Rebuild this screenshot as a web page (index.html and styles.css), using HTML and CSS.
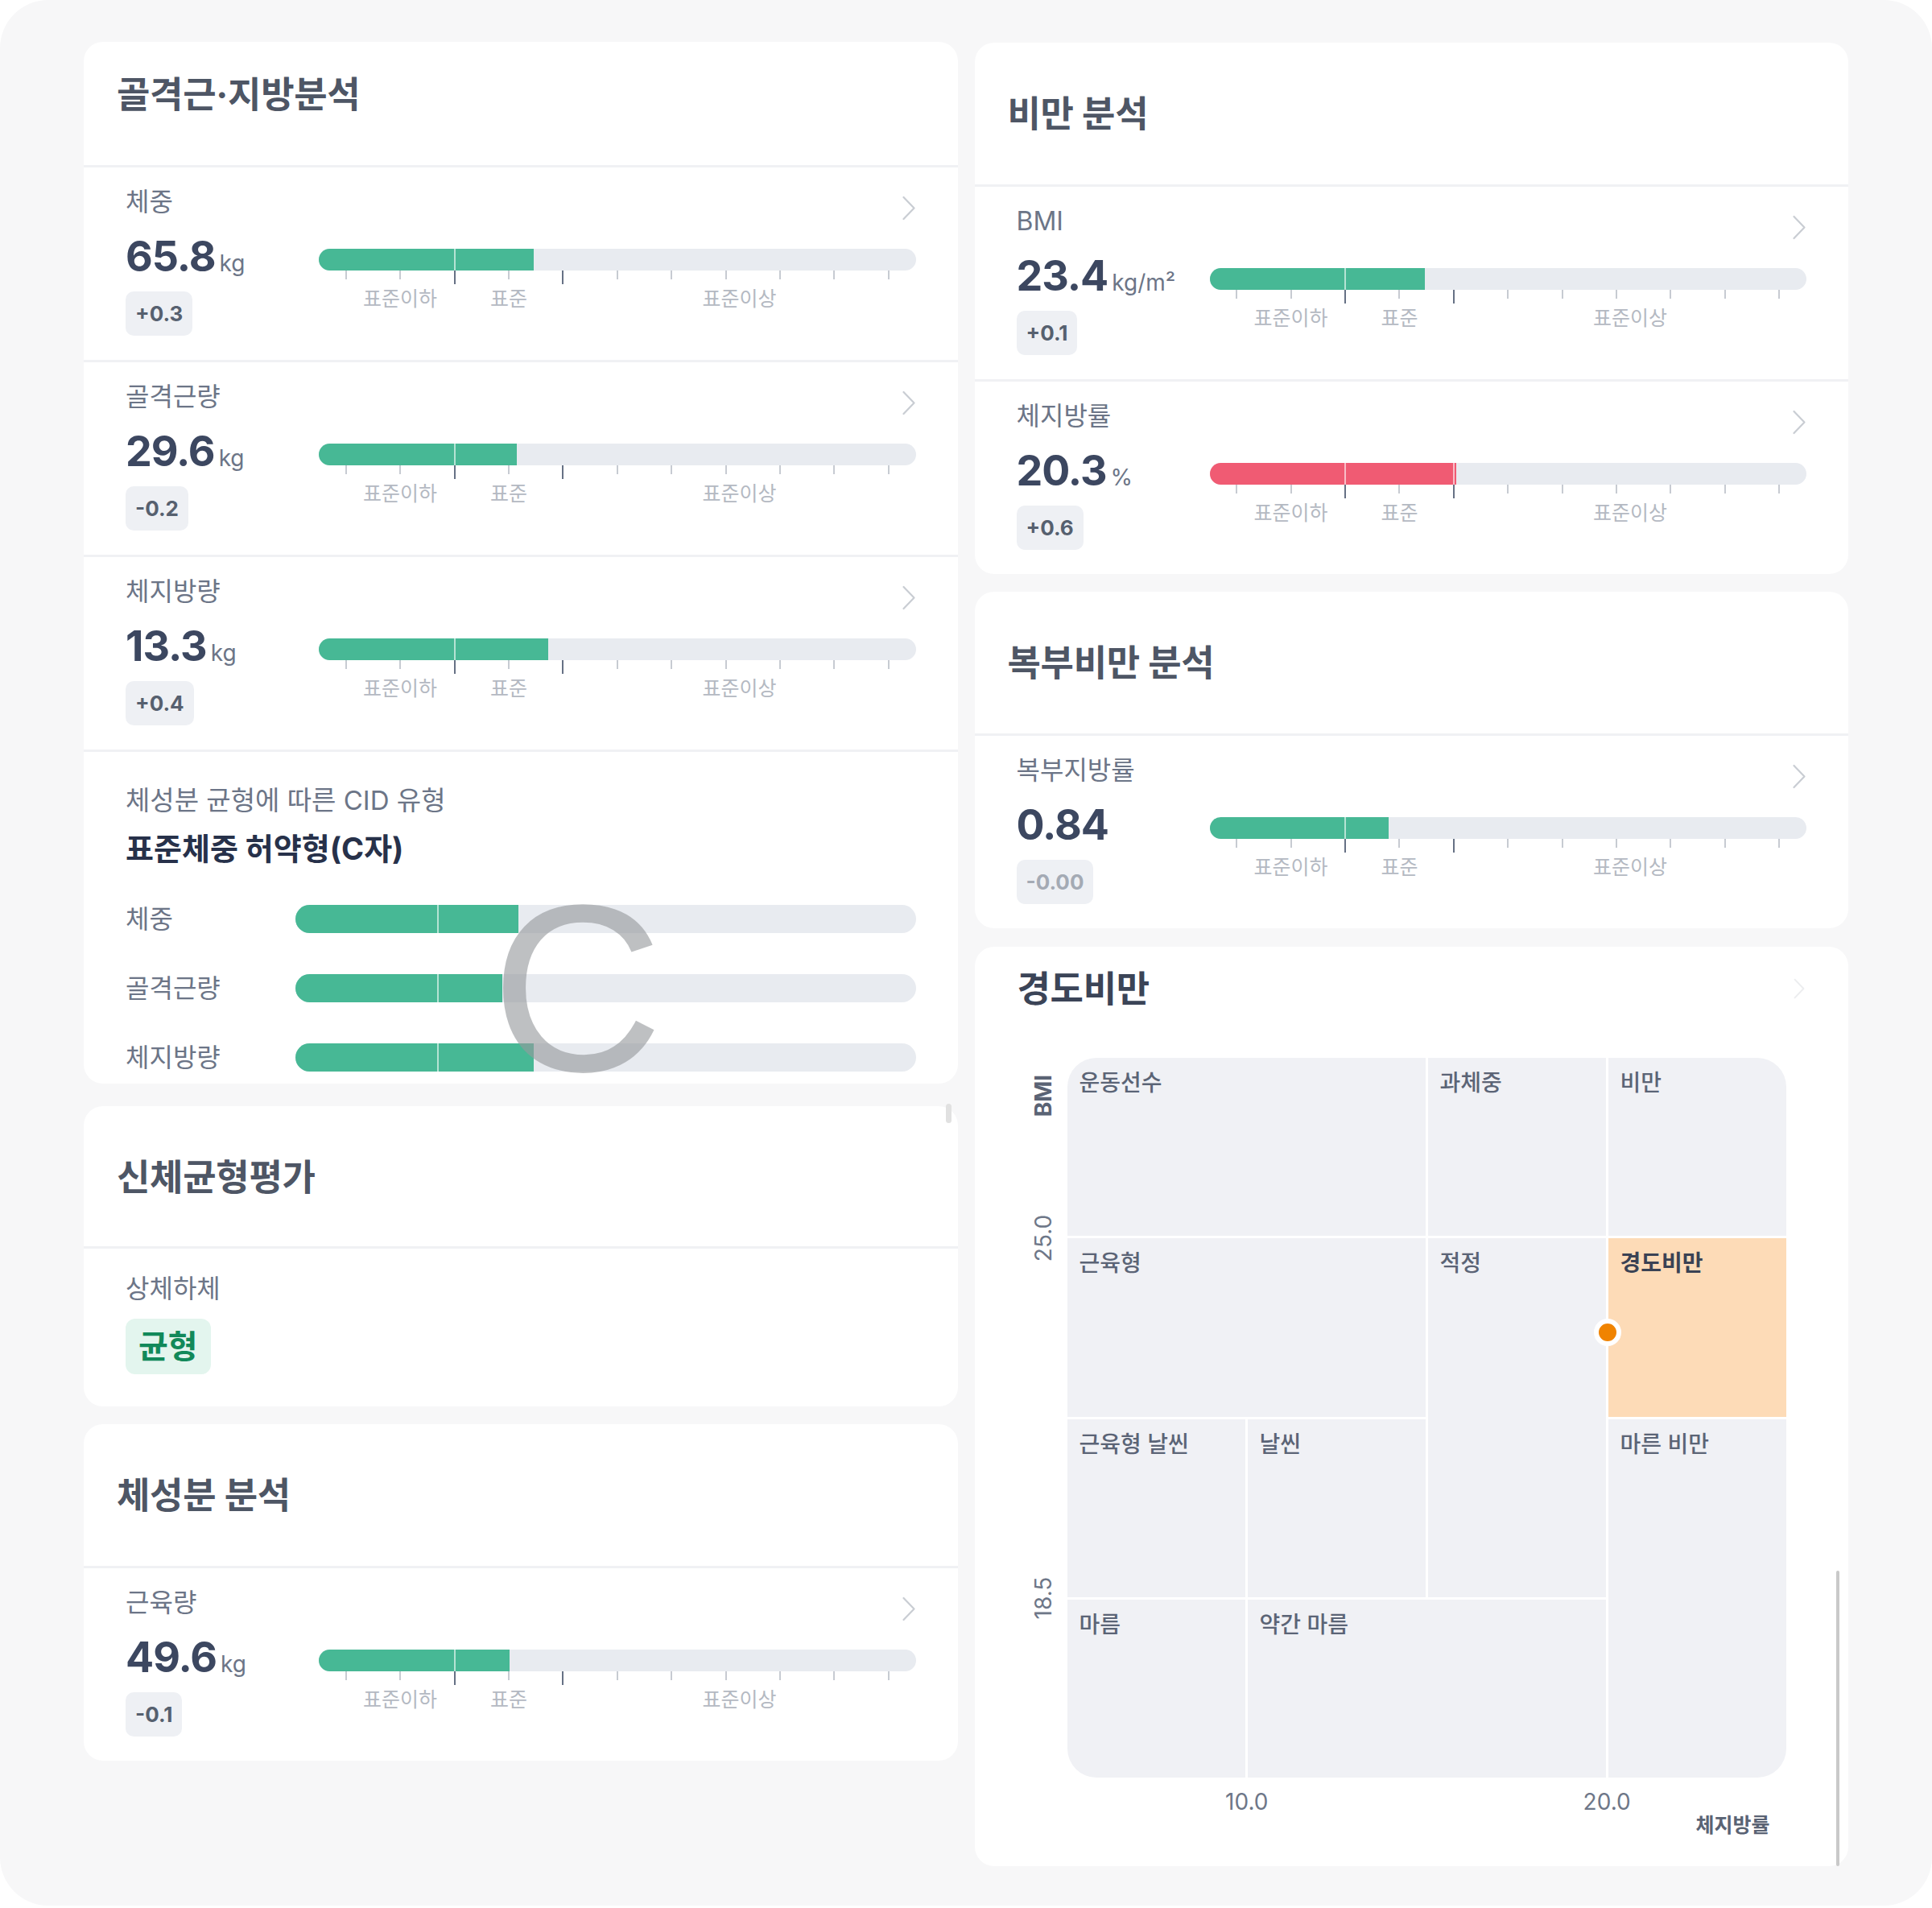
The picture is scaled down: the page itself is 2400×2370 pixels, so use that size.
FILE: index.html
```html
<!DOCTYPE html>
<html lang="ko">
<head>
<meta charset="utf-8">
<title>체성분 분석</title>
<link rel="stylesheet" href="styles.css">
</head>
<body>
<div class="screen">
  <div class="col">
    <section class="card card-skm">
      <header class="card-head compact"><h2 class="title">골격근·지방분석</h2></header>

      <div class="metric">
        <div class="metric-head"><span class="metric-label">체중</span><svg class="chev" viewBox="0 0 18 31"><path d="M2.5 2 L15.5 15.5 L2.5 29"/></svg></div>
        <div class="metric-main">
          <div class="metric-left">
            <div class="metric-value"><span class="num">65.8</span><span class="unit">kg</span></div>
            <span class="delta">+0.3</span>
          </div>
          <div class="gauge">
            <div class="bar"><div class="fill" style="width:36%"></div><i class="mark" style="left:22.73%"></i></div>
            <div class="ticks"><i></i><i></i><i class="major"></i><i></i><i class="major"></i><i></i><i></i><i></i><i></i><i></i><i></i></div>
            <div class="tick-labels"><span class="tl-low">표준이하</span><span class="tl-mid">표준</span><span class="tl-high">표준이상</span></div>
          </div>
        </div>
      </div>

      <div class="metric">
        <div class="metric-head"><span class="metric-label">골격근량</span><svg class="chev" viewBox="0 0 18 31"><path d="M2.5 2 L15.5 15.5 L2.5 29"/></svg></div>
        <div class="metric-main">
          <div class="metric-left">
            <div class="metric-value"><span class="num">29.6</span><span class="unit">kg</span></div>
            <span class="delta">-0.2</span>
          </div>
          <div class="gauge">
            <div class="bar"><div class="fill" style="width:33.2%"></div><i class="mark" style="left:22.73%"></i></div>
            <div class="ticks"><i></i><i></i><i class="major"></i><i></i><i class="major"></i><i></i><i></i><i></i><i></i><i></i><i></i></div>
            <div class="tick-labels"><span class="tl-low">표준이하</span><span class="tl-mid">표준</span><span class="tl-high">표준이상</span></div>
          </div>
        </div>
      </div>

      <div class="metric">
        <div class="metric-head"><span class="metric-label">체지방량</span><svg class="chev" viewBox="0 0 18 31"><path d="M2.5 2 L15.5 15.5 L2.5 29"/></svg></div>
        <div class="metric-main">
          <div class="metric-left">
            <div class="metric-value"><span class="num">13.3</span><span class="unit">kg</span></div>
            <span class="delta">+0.4</span>
          </div>
          <div class="gauge">
            <div class="bar"><div class="fill" style="width:38.4%"></div><i class="mark" style="left:22.73%"></i></div>
            <div class="ticks"><i></i><i></i><i class="major"></i><i></i><i class="major"></i><i></i><i></i><i></i><i></i><i></i><i></i></div>
            <div class="tick-labels"><span class="tl-low">표준이하</span><span class="tl-mid">표준</span><span class="tl-high">표준이상</span></div>
          </div>
        </div>
      </div>

      <div class="cid">
        <div class="cid-label">체성분 균형에 따른 CID 유형</div>
        <div class="cid-type">표준체중 허약형(C자)</div>
        <div class="cid-bars">
          <div class="cid-row"><span class="cid-name">체중</span><div class="bar lg"><div class="fill" style="width:35.9%"></div><i class="mark" style="left:23%"></i></div></div>
          <div class="cid-row"><span class="cid-name">골격근량</span><div class="bar lg"><div class="fill" style="width:33.3%"></div><i class="mark" style="left:23%"></i></div></div>
          <div class="cid-row"><span class="cid-name">체지방량</span><div class="bar lg"><div class="fill" style="width:38.4%"></div><i class="mark" style="left:23%"></i></div></div>
        </div>
        <span class="cid-letter">C</span>
      </div>
    </section>

    <section class="card card-balance">
      <i class="thumb"></i>
      <header class="card-head short"><h2 class="title">신체균형평가</h2></header>
      <div class="balance">
        <div class="metric-label">상체하체</div>
        <span class="balance-badge">균형</span>
      </div>
    </section>

    <section class="card card-comp">
      <header class="card-head"><h2 class="title">체성분 분석</h2></header>
      <div class="metric">
        <div class="metric-head"><span class="metric-label">근육량</span><svg class="chev" viewBox="0 0 18 31"><path d="M2.5 2 L15.5 15.5 L2.5 29"/></svg></div>
        <div class="metric-main">
          <div class="metric-left">
            <div class="metric-value"><span class="num">49.6</span><span class="unit">kg</span></div>
            <span class="delta">-0.1</span>
          </div>
          <div class="gauge">
            <div class="bar"><div class="fill" style="width:32%"></div><i class="mark" style="left:22.73%"></i></div>
            <div class="ticks"><i></i><i></i><i class="major"></i><i></i><i class="major"></i><i></i><i></i><i></i><i></i><i></i><i></i></div>
            <div class="tick-labels"><span class="tl-low">표준이하</span><span class="tl-mid">표준</span><span class="tl-high">표준이상</span></div>
          </div>
        </div>
      </div>
    </section>
  </div>

  <div class="col">
    <section class="card card-obesity">
      <header class="card-head"><h2 class="title">비만 분석</h2></header>
      <div class="metric">
        <div class="metric-head"><span class="metric-label">BMI</span><svg class="chev" viewBox="0 0 18 31"><path d="M2.5 2 L15.5 15.5 L2.5 29"/></svg></div>
        <div class="metric-main">
          <div class="metric-left">
            <div class="metric-value"><span class="num">23.4</span><span class="unit">kg/m²</span></div>
            <span class="delta">+0.1</span>
          </div>
          <div class="gauge">
            <div class="bar"><div class="fill" style="width:36.1%"></div><i class="mark" style="left:22.73%"></i></div>
            <div class="ticks"><i></i><i></i><i class="major"></i><i></i><i class="major"></i><i></i><i></i><i></i><i></i><i></i><i></i></div>
            <div class="tick-labels"><span class="tl-low">표준이하</span><span class="tl-mid">표준</span><span class="tl-high">표준이상</span></div>
          </div>
        </div>
      </div>
      <div class="metric">
        <div class="metric-head"><span class="metric-label">체지방률</span><svg class="chev" viewBox="0 0 18 31"><path d="M2.5 2 L15.5 15.5 L2.5 29"/></svg></div>
        <div class="metric-main">
          <div class="metric-left">
            <div class="metric-value"><span class="num">20.3</span><span class="unit">%</span></div>
            <span class="delta">+0.6</span>
          </div>
          <div class="gauge">
            <div class="bar"><div class="fill red" style="width:41.4%"></div><i class="mark" style="left:22.73%"></i><i class="mark" style="left:40.91%"></i></div>
            <div class="ticks"><i></i><i></i><i class="major"></i><i></i><i class="major"></i><i></i><i></i><i></i><i></i><i></i><i></i></div>
            <div class="tick-labels"><span class="tl-low">표준이하</span><span class="tl-mid">표준</span><span class="tl-high">표준이상</span></div>
          </div>
        </div>
      </div>
    </section>

    <section class="card card-abd">
      <header class="card-head"><h2 class="title">복부비만 분석</h2></header>
      <div class="metric">
        <div class="metric-head"><span class="metric-label">복부지방률</span><svg class="chev" viewBox="0 0 18 31"><path d="M2.5 2 L15.5 15.5 L2.5 29"/></svg></div>
        <div class="metric-main">
          <div class="metric-left">
            <div class="metric-value"><span class="num">0.84</span></div>
            <span class="delta muted">-0.00</span>
          </div>
          <div class="gauge">
            <div class="bar"><div class="fill" style="width:30%"></div><i class="mark" style="left:22.73%"></i></div>
            <div class="ticks"><i></i><i></i><i class="major"></i><i></i><i class="major"></i><i></i><i></i><i></i><i></i><i></i><i></i></div>
            <div class="tick-labels"><span class="tl-low">표준이하</span><span class="tl-mid">표준</span><span class="tl-high">표준이상</span></div>
          </div>
        </div>
      </div>
    </section>

    <section class="card card-chart">
      <div class="chart-head">
        <h2 class="chart-title">경도비만</h2>
        <svg class="chev faint" viewBox="0 0 18 31"><path d="M2.5 2 L15.5 15.5 L2.5 29"/></svg>
      </div>
      <div class="chart">
        <div class="y-axis">
          <span class="yl bold" style="top:47px">BMI</span>
          <span class="yl" style="top:224px">25.0</span>
          <span class="yl" style="top:671px">18.5</span>
        </div>
        <div class="plot">
          <div class="zones">
            <div class="zone z-athlete">운동선수</div>
            <div class="zone z-over">과체중</div>
            <div class="zone z-obese">비만</div>
            <div class="zone z-muscle">근육형</div>
            <div class="zone z-normal">적정</div>
            <div class="zone z-mild hl">경도비만</div>
            <div class="zone z-mslim">근육형 날씬</div>
            <div class="zone z-slim">날씬</div>
            <div class="zone z-thinfat">마른 비만</div>
            <div class="zone z-thin">마름</div>
            <div class="zone z-sthin">약간 마름</div>
          </div>
          <span class="dot" style="left:671px;top:341px"></span>
        </div>
        <div class="x-axis">
          <span class="xl" style="left:25%">10.0</span>
          <span class="xl" style="left:75.1%">20.0</span>
        </div>
        <div class="x-title">체지방률</div>
      </div>
      <i class="scrollbar"></i>
    </section>
  </div>
</div>
</body>
</html>
```

FILE: styles.css
```css
* { box-sizing: border-box; margin: 0; padding: 0; }
html, body { background: #ffffff; }
body {
  font-family: Inter, "Noto Sans CJK KR", sans-serif;
  color: #3e4961;
  width: 2400px;
  height: 2370px;
  overflow: hidden;
}

.screen {
  width: 2400px;
  height: 2367px;
  background: #f7f7f8;
  border-radius: 60px;
  padding: 52px 104px 0;
  display: flex;
  gap: 21px;
  overflow: hidden;
}

.col {
  flex: 1;
  min-width: 0;
  display: flex;
  flex-direction: column;
}

.card {
  position: relative;
  background: #ffffff;
  border-radius: 24px;
}

.card-balance { margin-top: 28px; }
.card-comp { margin-top: 22px; }
.card-obesity { margin-top: 1px; }
.card-abd { margin-top: 22px; }
.card-chart { margin-top: 23px; height: 1142px; }

/* headers */
.card-head {
  height: 176px;
  padding: 59px 41px 0;
}
.card-head.compact { height: 153px; padding-top: 36px; }
.card-head.short { height: 174px; }

.title {
  font-size: 45px;
  line-height: 60px;
  font-weight: 700;
  color: #4e5665;
  letter-spacing: -0.3px;
}

/* metric rows */
.metric {
  border-top: 3px solid #f0f1f4;
  padding: 21px 52px 30px;
}
.metric-head {
  display: flex;
  justify-content: space-between;
  align-items: flex-start;
  height: 44px;
}
.metric-label {
  font-size: 32px;
  line-height: 44px;
  color: #6c7587;
}
.chev {
  width: 18px;
  height: 31px;
  margin-top: 14px;
  flex: none;
}
.chev path {
  fill: none;
  stroke: #c9cdd3;
  stroke-width: 2.2;
  stroke-linecap: round;
  stroke-linejoin: round;
}

.metric-main {
  display: flex;
  margin-top: 20px;
}
.metric-left {
  width: 240px;
  flex: none;
}
.metric-value {
  display: flex;
  align-items: baseline;
  height: 52px;
}
.num {
  font-size: 52px;
  line-height: 52px;
  font-weight: 700;
  color: #3c4760;
  letter-spacing: -1px;
}
.unit {
  font-size: 28px;
  color: #6c7587;
  margin-left: 5px;
}
.delta {
  display: inline-block;
  margin-top: 17px;
  height: 55px;
  line-height: 55px;
  padding: 0 12px;
  border-radius: 10px;
  background: #eef0f4;
  font-size: 26px;
  font-weight: 700;
  color: #56606f;
}
.delta.muted { color: #a4aab4; }

/* gauge */
.gauge {
  flex: 1;
  min-width: 0;
  padding-top: 16px;
}
.bar {
  position: relative;
  height: 27px;
  border-radius: 14px;
  background: #e8ebf0;
  overflow: hidden;
}
.fill {
  height: 100%;
  background: #47b895;
}
.fill.red { background: #f05b73; }
.mark {
  position: absolute;
  top: 0;
  bottom: 0;
  width: 2px;
  margin-left: -1px;
  background: rgba(255, 255, 255, 0.6);
}
.ticks {
  display: grid;
  grid-template-columns: repeat(11, 1fr);
  height: 17px;
}
.ticks i {
  justify-self: center;
  width: 2px;
  height: 11px;
  background: #c7cbd2;
}
.ticks i.major {
  height: 17px;
  background: #667185;
}
.tick-labels {
  display: grid;
  grid-template-columns: repeat(44, 1fr);
  margin-top: 3px;
  font-size: 25px;
  line-height: 30px;
  color: #b4b9c2;
}
.tick-labels span {
  text-align: center;
  white-space: nowrap;
}
.tl-low { grid-column: 3 / 11; }
.tl-mid { grid-column: 11 / 19; }
.tl-high { grid-column: 19 / 45; }

/* CID */
.cid {
  position: relative;
  border-top: 3px solid #f0f1f4;
  height: 415px;
  padding: 38px 52px 0;
}
.cid-label {
  font-size: 33px;
  line-height: 44px;
  color: #6c7587;
}
.cid-type {
  margin-top: 14px;
  font-size: 38px;
  line-height: 48px;
  font-weight: 700;
  color: #27314a;
}
.cid-bars {
  margin-top: 46px;
  display: flex;
  flex-direction: column;
  gap: 51px;
}
.cid-row {
  display: flex;
  align-items: center;
  height: 35px;
}
.cid-name {
  width: 211px;
  flex: none;
  font-size: 32px;
  line-height: 44px;
  color: #6c7587;
}
.bar.lg {
  flex: 1;
  height: 35px;
  border-radius: 18px;
}
.cid-letter {
  position: absolute;
  left: 506px;
  top: 182px;
  font-family: "Liberation Sans", Arial, sans-serif;
  font-size: 296px;
  line-height: 224px;
  color: rgba(150, 153, 157, 0.62);
}

/* balance */
.balance {
  border-top: 3px solid #f0f1f4;
  padding: 28px 52px 40px;
}
.balance-badge {
  display: inline-block;
  margin-top: 15px;
  height: 69px;
  line-height: 69px;
  padding: 0 16px;
  border-radius: 12px;
  background: #e3f5ee;
  color: #12895a;
  font-size: 40px;
  font-weight: 700;
}
.thumb {
  position: absolute;
  right: 8px;
  top: -3px;
  width: 7px;
  height: 24px;
  border-radius: 4px;
  background: #e1e1e1;
}

/* chart card */
.card-chart { padding-top: 23px; }
.chart-head {
  display: flex;
  justify-content: space-between;
  align-items: flex-start;
  height: 60px;
  padding: 0 52px 0 53px;
}
.chart-title {
  font-size: 45px;
  line-height: 60px;
  font-weight: 700;
  color: #3b4457;
  letter-spacing: -0.3px;
}
.chev.faint { opacity: 0.35; margin-top: 16px; height: 26px; }

.chart {
  margin-top: 55px;
  display: grid;
  grid-template-columns: 115px 893px;
  grid-template-rows: 894px auto auto;
}
.y-axis {
  position: relative;
}
.yl {
  position: absolute;
  left: 85px;
  transform: translate(-50%, -50%) rotate(-90deg);
  font-size: 28px;
  line-height: 32px;
  white-space: nowrap;
  color: #6e7788;
}
.yl.bold { font-weight: 700; color: #5a6374; }

.plot {
  position: relative;
}
.zones {
  width: 893px;
  height: 894px;
  display: grid;
  grid-template-columns: repeat(4, 1fr);
  grid-template-rows: repeat(4, 1fr);
  gap: 3px;
  border-radius: 36px;
  overflow: hidden;
}
.zone {
  background: #f0f1f5;
  padding: 13px 15px;
  font-size: 28px;
  line-height: 36px;
  font-weight: 500;
  color: #5b6476;
  white-space: nowrap;
}
.zone.hl {
  background: #fddbb7;
  color: #3a4254;
  font-weight: 700;
}
.z-athlete { grid-column: 1 / 3; grid-row: 1; }
.z-over { grid-column: 3; grid-row: 1; }
.z-obese { grid-column: 4; grid-row: 1; }
.z-muscle { grid-column: 1 / 3; grid-row: 2; }
.z-normal { grid-column: 3; grid-row: 2 / 4; }
.z-mild { grid-column: 4; grid-row: 2; }
.z-mslim { grid-column: 1; grid-row: 3; }
.z-slim { grid-column: 2; grid-row: 3; }
.z-thinfat { grid-column: 4; grid-row: 3 / 5; }
.z-thin { grid-column: 1; grid-row: 4; }
.z-sthin { grid-column: 2 / 4; grid-row: 4; }

.dot {
  position: absolute;
  width: 34px;
  height: 34px;
  margin: -17px 0 0 -17px;
  border-radius: 50%;
  background: #f08300;
  border: 6px solid #ffffff;
}

.x-axis {
  grid-column: 2;
  position: relative;
  height: 36px;
  margin-top: 12px;
}
.xl {
  position: absolute;
  top: 0;
  transform: translateX(-50%);
  font-size: 28px;
  line-height: 36px;
  color: #6e7788;
}
.x-title {
  grid-column: 2;
  margin-top: -5px;
  padding-right: 20px;
  text-align: right;
  font-size: 25px;
  line-height: 32px;
  font-weight: 700;
  color: #5a6374;
}

.scrollbar {
  position: absolute;
  right: 11px;
  top: 775px;
  bottom: 0;
  width: 4px;
  border-radius: 2px;
  background: #c9c9c9;
}
```
